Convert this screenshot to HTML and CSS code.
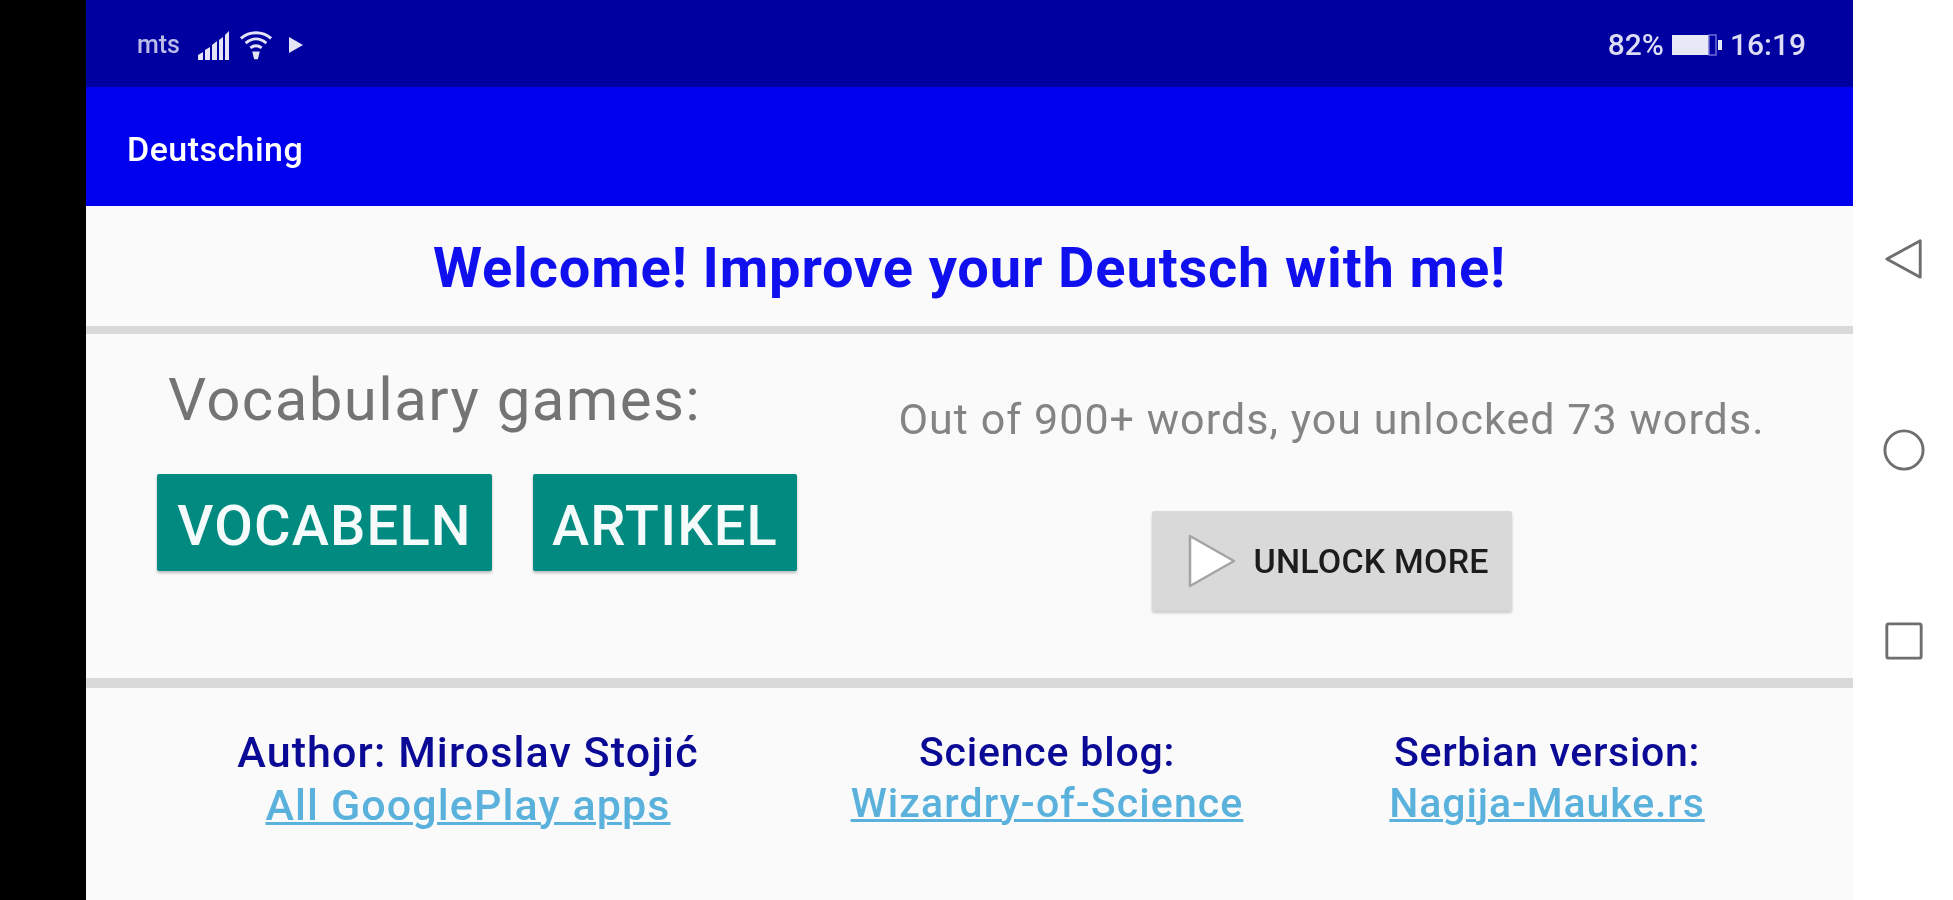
FILE: index.html
```html
<!DOCTYPE html>
<html lang="en">
<head>
<meta charset="utf-8">
<title>Deutsching</title>
<link rel="stylesheet" href="styles.css">
</head>
<body>
<div class="screen">
  <div class="letterbox"></div>
  <div class="app">
    <div class="status">
      <div class="status-left">
        <span class="carrier">mts</span>
        <svg class="ic-signal" viewBox="0 0 32 30"><path d="M0 30v-5l5-3v8zM7 30V20l5-3v13zM14 30V15l5-4v19zM21 30V10l4-3v23zM27 30V5l4-4v29z" fill="#e4e4f6"/></svg>
        <svg class="ic-wifi" viewBox="0 0 36 32"><path d="M2 9C11 1 25 1 34 9M7 14c7-6 15-6 22 0M12 19c4-3 8-3 12 0" fill="none" stroke="#e4e4f6" stroke-width="3"/><path d="M14 23h8l-2 8h-4z" fill="#e4e4f6"/></svg>
        <svg class="ic-play" viewBox="0 0 16 18"><path d="M1 1l14 8-14 8z" fill="#e4e4f6"/></svg>
      </div>
      <div class="status-right">
        <span>82%</span>
        <svg class="ic-batt" viewBox="0 0 52 24"><rect x="1" y="2" width="38" height="20" fill="#e8e8f6"/><rect x="38" y="2" width="7" height="20" fill="#0000a0" stroke="#6c6cd8" stroke-width="1.5"/><rect x="47" y="7" width="4" height="10" fill="#e8e8f6"/></svg>
        <span>16:19</span>
      </div>
    </div>
    <div class="appbar"><span class="appbar-title">Deutsching</span></div>
    <h1 class="welcome">Welcome! Improve your Deutsch with me!</h1>
    <div class="games">
      <div class="games-left">
        <div class="games-title">Vocabulary games:</div>
        <div class="game-buttons">
          <button class="btn-teal btn-voc">VOCABELN</button>
          <button class="btn-teal btn-art">ARTIKEL</button>
        </div>
      </div>
      <div class="games-right">
        <div class="progress">Out of 900+ words, you unlocked 73 words.</div>
        <button class="btn-unlock">
          <svg class="ic-unlock" viewBox="0 0 50 56"><path d="M3 3l44 25L3 53z" fill="#fff" stroke="#a4a4a4" stroke-width="2.5" stroke-linejoin="round"/></svg>
          <span>UNLOCK MORE</span>
        </button>
      </div>
    </div>
    <div class="footer">
      <div class="credit credit-author"><div class="credit-name">Author: Miroslav Stojić</div><a class="credit-link">All GooglePlay apps</a></div>
      <div class="credit credit-blog"><div class="credit-name">Science blog:</div><a class="credit-link">Wizardry-of-Science</a></div>
      <div class="credit credit-serb"><div class="credit-name">Serbian version:</div><a class="credit-link">Nagija-Mauke.rs</a></div>
    </div>
  </div>
  <div class="nav">
    <svg class="ic-nav" viewBox="0 0 44 44"><path d="M4 22L39 3v38z" fill="none" stroke="#6e6e6e" stroke-width="3" stroke-linejoin="round"/></svg>
    <svg class="ic-nav" viewBox="0 0 44 44"><circle cx="22" cy="22" r="20" fill="none" stroke="#6e6e6e" stroke-width="3"/></svg>
    <svg class="ic-nav" viewBox="0 0 44 44"><rect x="4" y="4" width="36" height="36" rx="2" fill="none" stroke="#6e6e6e" stroke-width="3"/></svg>
  </div>
</div>
</body>
</html>
```
FILE: styles.css
```css
* { box-sizing: border-box; }
html, body { margin: 0; height: 100%; overflow: hidden; background: #fff; }
body { font-family: Roboto, "Liberation Sans", sans-serif; }
.screen { display: flex; width: 1953px; height: 900px; filter: blur(0.7px); }
.letterbox { width: 86px; background: #000; flex: none; }
.app { width: 1767px; flex: none; background: #fafafa; display: flex; flex-direction: column; }
.nav { flex: 1; background: #fff; display: flex; flex-direction: column; align-items: center; padding: 237px 0 0 1px; gap: 147px; }
.ic-nav { width: 42px; height: 44px; }

.status { height: 87px; background: #0000a0; color: #dcdcf4; display: flex; justify-content: space-between; align-items: center; padding: 2px 47px 0 51px; flex: none; }
.status-left, .status-right { display: flex; align-items: center; }
.carrier { font-size: 25px; font-weight: 500; margin-right: 18px; opacity: .85; }
.ic-signal { width: 32px; height: 30px; margin-right: 9px; }
.ic-wifi { width: 34px; height: 32px; margin-right: 15px; }
.ic-play { width: 16px; height: 18px; }
.status-right { font-size: 30px; font-weight: 500; }
.ic-batt { width: 52px; height: 24px; margin: 0 7px 0 7px; }

.appbar { height: 119px; background: #0000ee; color: #fff; font-size: 34px; font-weight: 500; letter-spacing: .45px; display: flex; align-items: center; padding: 5px 0 0 41px; flex: none; }

.welcome { margin: 0; height: 128px; padding-top: 4px; border-bottom: 8px solid #d9d9d9; display: flex; align-items: center; justify-content: center; font-size: 56px; font-weight: 700; letter-spacing: .85px; color: #1010ee; flex: none; }

.games { height: 354px; border-bottom: 10px solid #d9d9d9; display: flex; flex: none; }
.games-left { width: 768px; padding: 32px 0 0 71px; }
.games-title { font-size: 60px; line-height: 68px; font-weight: 400; letter-spacing: 1.4px; color: #747474; padding-left: 11px; }
.game-buttons { display: flex; gap: 41px; margin-top: 40px; }
.btn-teal { height: 97px; border: 0; border-radius: 2px; background: #008a80; color: #f4fbfa; font: 500 56px Roboto, sans-serif; letter-spacing: 1.2px; padding: 6px 0 0; box-shadow: 0 2px 3px rgba(0,0,0,.25); }
.btn-voc { width: 335px; }
.btn-art { width: 264px; }
.games-right { flex: 1; display: flex; flex-direction: column; align-items: center; padding-top: 60px; padding-right: 44px; }
.progress { font-size: 43px; line-height: 50px; font-weight: 400; letter-spacing: 1.05px; color: #848484; white-space: nowrap; }
.btn-unlock { width: 360px; height: 100px; margin-top: 67px; border: 0; border-radius: 2px; background: #d8d9d8; box-shadow: 0 2px 3px rgba(0,0,0,.2); display: flex; align-items: center; padding: 0 0 0 35px; font: 500 34px Roboto, sans-serif; letter-spacing: .2px; color: #1c1c1c; }
.ic-unlock { width: 50px; height: 56px; margin-right: 17px; flex: none; }

.footer { flex: 1; display: flex; padding: 41px 0 0 132px; color: #0a0a96; }
.credit { text-align: center; }
.credit-author { width: 500px; font-size: 43px; --name-ls: 1.1px; --link-ls: 1.1px; --link-lh: 60px; }
.credit-blog { width: 400px; margin-left: 129px; font-size: 41px; --name-ls: .8px; --link-ls: 1.1px; --link-lh: 56px; }
.credit-serb { width: 320px; margin-left: 140px; font-size: 41px; --name-ls: .7px; --link-ls: .9px; --link-lh: 56px; }
.credit-name { font-weight: 500; line-height: 46px; letter-spacing: var(--name-ls); }
.credit-link { display: block; color: #5ab2dc; font-weight: 500; line-height: var(--link-lh); letter-spacing: var(--link-ls); text-decoration: underline; text-decoration-thickness: 3px; }
```
